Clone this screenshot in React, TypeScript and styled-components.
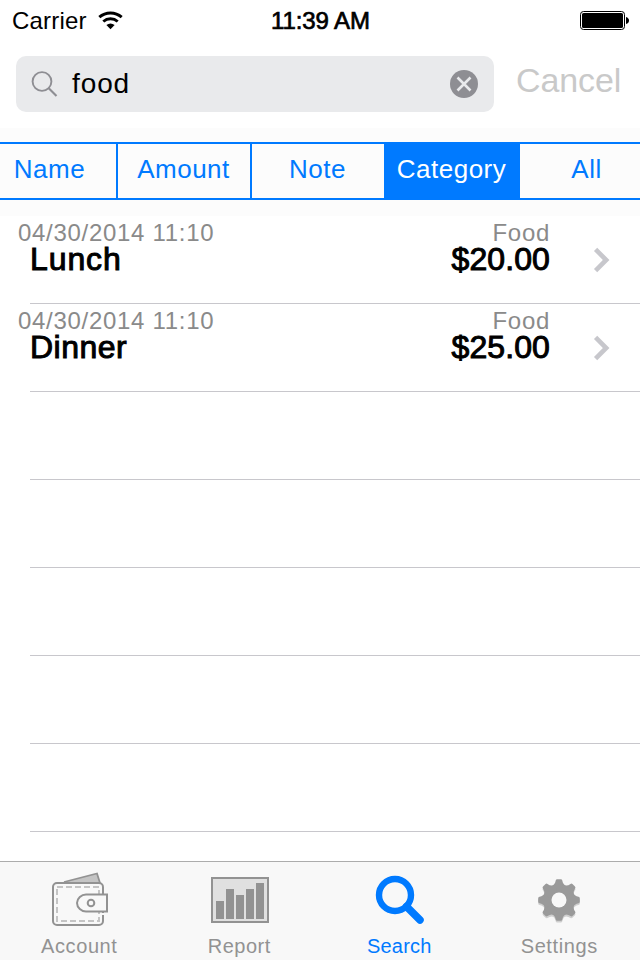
import React from "react";
import styled, { createGlobalStyle } from "styled-components";

const blue = "#007aff";
const gray = "#929292";

const GlobalStyle = createGlobalStyle`
  *, *::before, *::after { box-sizing: border-box; }
  body { margin: 0; background: #fff; }
  svg { display: block; flex: none; }
  button { appearance: none; background: none; border: 0; padding: 0; font: inherit; color: inherit; }
`;

const Screen = styled.div`
  width: 640px;
  height: 960px;
  display: flex;
  flex-direction: column;
  overflow: hidden;
  background: #fff;
  color: #000;
  font-family: "Liberation Sans", Arial, sans-serif;
  white-space: nowrap;
`;

const StatusBar = styled.header`
  flex: none;
  height: 40px;
  display: grid;
  grid-template-columns: 1fr auto 1fr;
  align-items: center;
  padding: 1px 11px 0 12px;
  font-size: 24px;
  line-height: 40px;
`;

const Carrier = styled.div`
  display: flex;
  align-items: center;
  gap: 11px;
  letter-spacing: 0.2px;
`;

const Clock = styled.div`
  letter-spacing: -0.1px;
  -webkit-text-stroke: 0.7px #000;
`;

const BatterySlot = styled.div`
  display: flex;
  justify-content: flex-end;
`;

const SearchBar = styled.div`
  flex: none;
  height: 88px;
  display: flex;
  align-items: flex-start;
  padding: 16px 18px 0 16px;
`;

const SearchField = styled.div`
  width: 478px;
  height: 56px;
  display: flex;
  align-items: center;
  padding: 0 16px 0 15px;
  border-radius: 10px;
  background: #e9eaec;
`;

const Query = styled.span`
  flex: 1;
  margin-left: 14px;
  font-size: 28px;
  line-height: 56px;
  letter-spacing: 0.9px;
`;

const CancelButton = styled.button`
  margin-left: 22px;
  font-size: 34px;
  line-height: 48px;
  letter-spacing: -0.1px;
  color: #c9c9c9;
`;

const ScopeBar = styled.nav`
  flex: none;
  height: 88px;
  padding-top: 14px;
  overflow: hidden;
  background: #fcfcfc;
`;

const Segments = styled.div`
  width: 672px;
  height: 58px;
  margin-left: -18px;
  display: grid;
  grid-template-columns: 136px 134px 132px 136px 134px;
  border-top: 2px solid ${blue};
  border-bottom: 2px solid ${blue};
`;

const Segment = styled.button<{ $active?: boolean; $divider?: boolean; $nudge?: number }>`
  border-right: ${(p) => (p.$divider ? `2px solid ${blue}` : "0")};
  background: ${(p) => (p.$active ? blue : "transparent")};
  color: ${(p) => (p.$active ? "#fff" : blue)};
  font-size: 26px;
  line-height: 50px;
  letter-spacing: 0.5px;
  padding: 0 ${(p) => Math.max(0, -(p.$nudge ?? 0))}px 4px ${(p) => Math.max(0, p.$nudge ?? 0)}px;
`;

const List = styled.main`
  flex: 1;
  min-height: 0;
  overflow: hidden;
`;

const Row = styled.div`
  height: 88px;
  display: grid;
  grid-template-columns: 1fr auto 60px;
  grid-template-rows: 30px 58px;
  padding: 0 30px 0 18px;
  background: linear-gradient(#c8c7cc, #c8c7cc) 30px 100% / 100% 1px no-repeat;
`;

const Meta = styled.span<{ $end?: boolean }>`
  font-size: 24px;
  line-height: 34px;
  letter-spacing: 0.7px;
  color: #8a8a8a;
  text-align: ${(p) => (p.$end ? "right" : "left")};
`;

const Title = styled.span<{ $tight?: boolean }>`
  grid-column: 1;
  padding-left: 12px;
  font-size: 32px;
  line-height: 27px;
  letter-spacing: ${(p) => (p.$tight ? "0.5px" : "0.9px")};
  -webkit-text-stroke: 1px #000;
`;

const Amount = styled.span`
  font-size: 32px;
  line-height: 27px;
  letter-spacing: 0.1px;
  text-align: right;
  -webkit-text-stroke: 1px #000;
`;

const Disclosure = styled.span`
  display: flex;
  justify-content: flex-end;
  align-items: flex-start;
  padding-top: 1px;
`;

const TabBar = styled.nav`
  flex: none;
  height: 99px;
  display: grid;
  grid-template-columns: repeat(4, 1fr);
  border-top: 1px solid #acacac;
  background: #f8f8f8;
`;

const Tab = styled.button<{ $active?: boolean }>`
  display: flex;
  flex-direction: column;
  align-items: center;
  color: ${(p) => (p.$active ? blue : gray)};
  font-size: 20px;
  line-height: 24px;
`;

const TabIcon = styled.span`
  height: 72px;
  padding-top: 8px;
`;

const TabLabel = styled.span<{ $spacing: number }>`
  padding-right: 1.5px;
  letter-spacing: ${(p) => p.$spacing}px;
`;

const WifiIcon = () => (
  <svg width="26" height="20" viewBox="0 0 26 20" fill="none" stroke="#000" strokeWidth="2.9">
    <path d="M1.300 6.200A17 17 0 0 1 23.700 6.200" />
    <path d="M5.300 10.500A10.800 10.800 0 0 1 19.700 10.500" />
    <path d="M12.500 18.200 8.400 14Q12.500 10.800 16.600 14Z" fill="#000" stroke="none" />
  </svg>
);

const BatteryIcon = () => (
  <svg width="49" height="20" viewBox="0 0 49 20">
    <rect x="0.5" y="0.5" width="44" height="18" rx="3" fill="#fff" stroke="#000" />
    <rect x="2" y="2" width="41" height="15" rx="1.6" />
    <path d="M46 6Q49 7 49 9.5T46 13Z" />
  </svg>
);

const GlassIcon = () => (
  <svg width="27" height="27" viewBox="0 0 27 27" fill="none" stroke="#8e8e93" strokeWidth="1.9">
    <circle cx="11" cy="10.500" r="9.400" />
    <path d="m17.500 17 8 8" strokeWidth="2.200" />
  </svg>
);

const ClearIcon = () => (
  <svg width="28" height="28" viewBox="0 0 28 28">
    <circle cx="14" cy="14" r="14" fill="#8e8e93" />
    <path d="m7.500 7.500 13 13m0-13-13 13" stroke="#e9eaec" strokeWidth="2.600" />
  </svg>
);

const ChevronIcon = () => (
  <svg width="17" height="26" viewBox="0 0 17 26" fill="none" stroke="#c7c7cc" strokeWidth="4.600">
    <path d="m2.600 2.400 10.600 10.600L2.600 23.600" />
  </svg>
);

const WalletIcon = () => (
  <svg width="60" height="60" viewBox="0 0 60 60" fill="none" stroke="#929292">
    <path d="M14 12 47 3.500 50 13" fill="#c4c4c4" strokeWidth="1.800" />
    <rect x="3" y="13" width="50" height="42" rx="4" fill="#f8f8f8" strokeWidth="2" />
    <rect x="7" y="17" width="42" height="34" stroke="#c4c4c4" strokeWidth="2" strokeDasharray="6 3" />
    <path d="M53 43V45" stroke="#f8f8f8" strokeWidth="3" />
    <path d="M57 24.500H36c-4.500 0-9 4-9 8.500s4.500 8.500 9 8.500h21z" fill="#f8f8f8" strokeWidth="2" />
    <circle cx="41" cy="33" r="3.300" strokeWidth="2" />
  </svg>
);

const ReportIcon = () => (
  <svg width="58" height="60" viewBox="0 0 58 60" fill="#929292">
    <rect x="1" y="8" width="56" height="44" fill="#e0e0e0" stroke="#929292" strokeWidth="2" />
    <path d="M5 31h8v18H5zM15 19h8v30h-8zM25 25h8v24h-8zM35 19h8v30h-8zM45 13h8v36h-8z" />
  </svg>
);

const SearchIcon = () => (
  <svg width="50" height="60" viewBox="0 0 50 60" fill="none" stroke={blue}>
    <circle cx="20" cy="25" r="16" strokeWidth="6.400" />
    <path d="M31.500 36.500 45 50" strokeWidth="7.500" strokeLinecap="round" />
  </svg>
);

const toothPath =
  "M-8-13.500Q-3.800-15.500-3.300-19.500Q-3-20.800-1.800-20.800H1.800Q3-20.800 3.300-19.500Q3.800-15.500 8-13.500L0 0Z";

const GearShape = () => (
  <>
    <circle r="15" />
    {[0, 45, 90, 135, 180, 225, 270, 315].map((a) => (
      <path key={a} transform={`rotate(${a})`} d={toothPath} />
    ))}
  </>
);

const GearIcon = () => (
  <svg width="46" height="60" viewBox="-22 -30 46 60">
    <g fill="#cfcfcf" transform="translate(0 1.800)">
      <GearShape />
    </g>
    <g fill="#9a9a9a">
      <GearShape />
    </g>
    <circle r="7.500" fill="#f8f8f8" />
  </svg>
);

const scopes = [
  { label: "Name", nudge: 1 },
  { label: "Amount", nudge: -1 },
  { label: "Note", nudge: -1 },
  { label: "Category", nudge: -1 },
  { label: "All", nudge: -1 },
];

const entries = [
  { date: "04/30/2014 11:10", category: "Food", title: "Lunch", amount: "$20.00" },
  { date: "04/30/2014 11:10", category: "Food", title: "Dinner", amount: "$25.00" },
];

const tabs = [
  { label: "Account", icon: <WalletIcon />, spacing: 0.6 },
  { label: "Report", icon: <ReportIcon />, spacing: 0.5 },
  { label: "Search", icon: <SearchIcon />, spacing: 0.2 },
  { label: "Settings", icon: <GearIcon />, spacing: 0.6 },
];

export default function App() {
  return (
    <>
      <GlobalStyle />
      <Screen>
        <StatusBar>
          <Carrier>
            Carrier
            <WifiIcon />
          </Carrier>
          <Clock>11:39 AM</Clock>
          <BatterySlot>
            <BatteryIcon />
          </BatterySlot>
        </StatusBar>
        <SearchBar>
          <SearchField>
            <GlassIcon />
            <Query>food</Query>
            <ClearIcon />
          </SearchField>
          <CancelButton>Cancel</CancelButton>
        </SearchBar>
        <ScopeBar>
          <Segments>
            {scopes.map(({ label, nudge }, i) => (
              <Segment key={label} $active={label === "Category"} $divider={i < 2} $nudge={nudge}>
                {label}
              </Segment>
            ))}
          </Segments>
        </ScopeBar>
        <List>
          {entries.map((e) => (
            <Row key={e.title}>
              <Meta>{e.date}</Meta>
              <Meta $end>{e.category}</Meta>
              <span />
              <Title $tight={e.title === "Dinner"}>{e.title}</Title>
              <Amount>{e.amount}</Amount>
              <Disclosure>
                <ChevronIcon />
              </Disclosure>
            </Row>
          ))}
          {[0, 1, 2, 3, 4].map((n) => (
            <Row key={n} />
          ))}
        </List>
        <TabBar>
          {tabs.map((t) => (
            <Tab key={t.label} $active={t.label === "Search"}>
              <TabIcon>{t.icon}</TabIcon>
              <TabLabel $spacing={t.spacing}>{t.label}</TabLabel>
            </Tab>
          ))}
        </TabBar>
      </Screen>
    </>
  );
}
